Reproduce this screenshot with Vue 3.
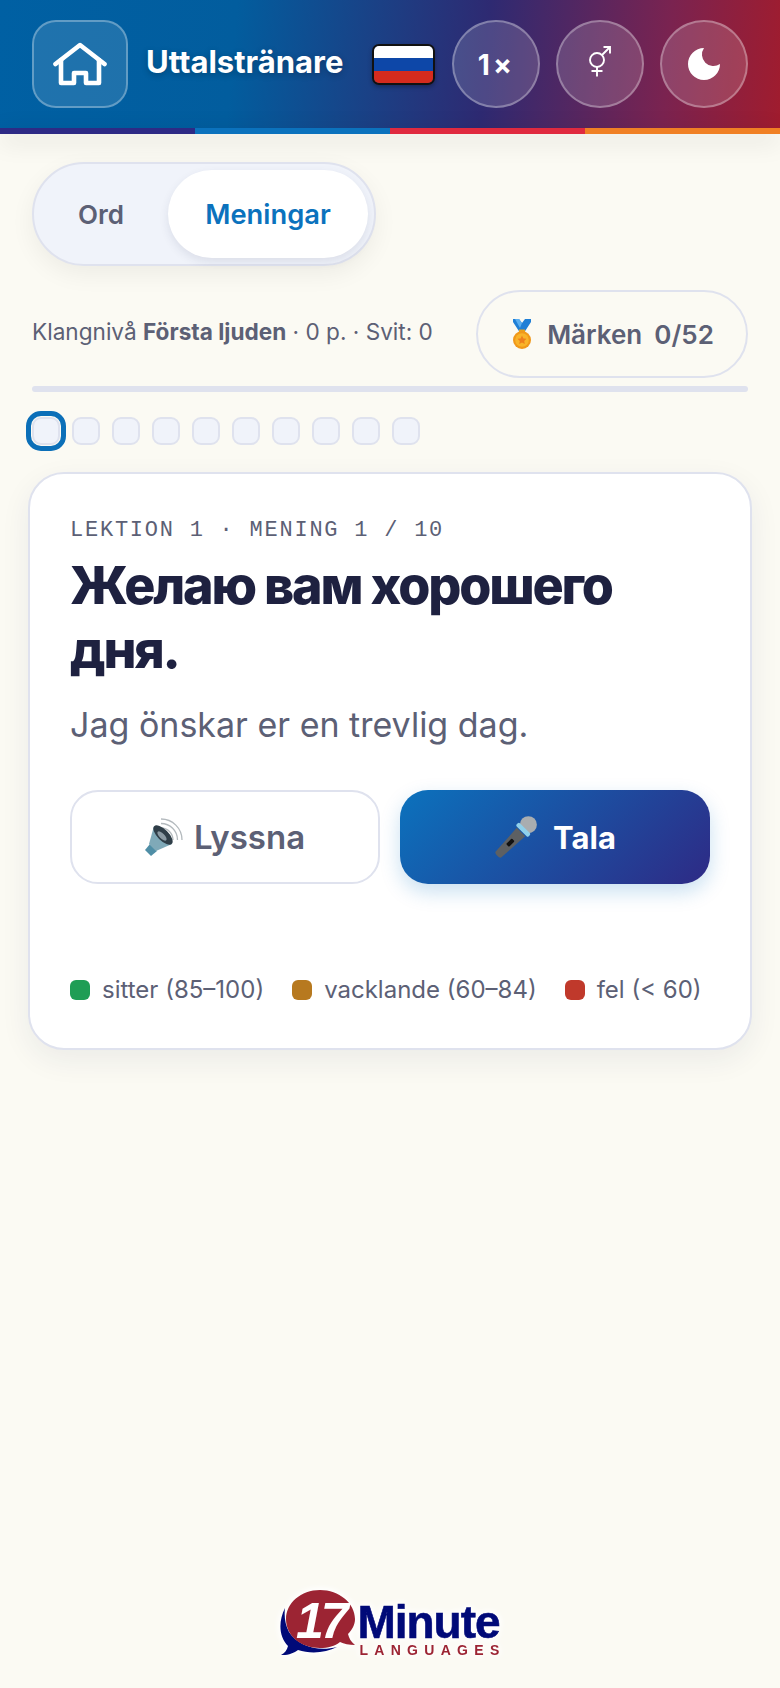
<script setup>
const cells = Array.from({ length: 10 }, (_, i) => i)
const legend = [
  { label: 'sitter (85–100)', color: '#1f9d55' },
  { label: 'vacklande (60–84)', color: '#b7791f' },
  { label: 'fel (< 60)', color: '#c0392b' }
]
</script>

<template>
  <div class="page">
    <header class="topbar">
      <button class="home">
        <svg width="54" height="44" viewBox="0 0 54 44" fill="none" stroke="#fff" stroke-width="4.600" stroke-linecap="round" stroke-linejoin="round">
          <path d="M2.500 22 L27 3 L51.500 22" />
          <path d="M8 18 V41 H21 V31 H33 V41 H46 V18" />
        </svg>
      </button>
      <h1 class="title">Uttalstränare</h1>
      <div class="flag"><i class="w"></i><i class="b"></i><i class="r"></i></div>
      <button class="round speed">1×</button>
      <button class="round">
        <svg class="gender" width="22" height="31" viewBox="0 0 22 31" fill="none" stroke="#fff" stroke-width="1.900">
          <circle cx="8" cy="14" r="7" />
          <path d="M13 9 L20.500 1.500 M14.500 1 H21 V7.500 M8 21 V30.500 M2.500 25 H13.500" />
        </svg>
      </button>
      <button class="round">
        <svg width="32" height="32" viewBox="0 0 32 32"><path fill="#fff" d="M16 0 A16 16 0 1 0 32 16 A11.500 11.500 0 0 1 16 0 Z" /></svg>
      </button>
    </header>
    <div class="stripe"><i></i><i></i><i></i><i></i></div>

    <main class="content">
      <div class="tabs">
        <button class="tab">Ord</button>
        <button class="tab active">Meningar</button>
      </div>

      <div class="status">
        <p class="level">Klangnivå <b>Första ljuden</b> · 0 p. · Svit: 0</p>
        <button class="badges">
          <svg class="medal" width="18" height="30" viewBox="0 0 18 30">
            <path fill="#1f7fd6" d="M0 0 H6 L9 4 L12 0 H18 V3 L11.500 13 H6.500 L0 3 Z" />
            <path fill="#5aaef0" d="M6 0 L9 4 L7 9 L2 0 Z" />
            <rect x="6" y="10.500" width="6" height="3" fill="#e8a21c" />
            <circle cx="9" cy="21" r="9" fill="#f0981a" />
            <circle cx="9" cy="21" r="6.800" fill="#f9b42a" />
            <path fill="#ee7f1c" d="M9 16.500 l1.400 2.900 3.100.4-2.300 2.100.6 3.100-2.800-1.500-2.800 1.500.6-3.100-2.300-2.100 3.100-.4z" />
          </svg>
          <span class="badge-label">Märken</span>
          <span>0/52</span>
        </button>
      </div>

      <div class="progress"></div>

      <div class="cells">
        <span v-for="c in cells" :key="c" class="cell" :class="{ current: c === 0 }"></span>
      </div>

      <section class="card">
        <p class="eyebrow">LEKTION 1 · MENING 1 / 10</p>
        <h2 class="sentence">Желаю вам хорошего дня.</h2>
        <p class="translation">Jag önskar er en trevlig dag.</p>

        <div class="actions">
          <button class="action listen">
            <svg width="38" height="38" viewBox="0 0 38 38">
              <g fill="none" stroke="#b3b9bd" stroke-width="1.300">
                <path d="M16 10 A12 12 0 0 1 28 22" />
                <path d="M16 5.500 A16.500 16.500 0 0 1 32.500 22" />
                <path d="M16 1 A21 21 0 0 1 37 22" />
              </g>
              <path fill="#4f8ea6" d="M5 26 L12 33 L6 38 L0 32 Z" />
              <path fill="#7fa9b8" d="M9 8 L27 26 L11 33 L4 26 Z" />
              <ellipse cx="18" cy="17" rx="12.500" ry="5.500" transform="rotate(45 18 17)" fill="#2f3e48" />
              <ellipse cx="17" cy="18" rx="6" ry="2.600" transform="rotate(45 17 18)" fill="#8b9aa3" />
            </svg>
            <span>Lyssna</span>
          </button>
          <button class="action speak">
            <svg width="44" height="44" viewBox="0 0 44 44">
              <g transform="rotate(45 22 22)">
                <path fill="#5d6063" d="M16 15 H28 L26 47 C25.500 49 18.500 49 18 47 Z" />
                <rect x="20" y="26" width="4" height="8" rx="1" fill="#111" />
                <circle cx="22" cy="4.500" r="8.500" fill="#a9adb0" />
                <rect x="13.500" y="9.500" width="17" height="4.500" rx="1.500" fill="#8fd0ea" />
              </g>
            </svg>
            <span>Tala</span>
          </button>
        </div>

        <ul class="legend">
          <li v-for="item in legend" :key="item.label">
            <i :style="{ background: item.color }"></i>
            <span>{{ item.label }}</span>
          </li>
        </ul>
      </section>
    </main>

    <footer class="brand">
      <div class="logo">
        <svg class="bubble" width="75" height="67" viewBox="0 0 75 67">
          <path fill="#000a78" d="M5 18 C-2 32 -1 47 8 56 C7 60 5 63 1 65 C8 65.500 14 63 18 60 C30 64 46 63 57 57 C38 62 18 56 9 42 C5 34 4 26 5 18 Z" />
          <path fill="#9c2433" d="M40 0 C21 0 6 13 6 29 C6 46 21 58 40 58 C48 58 55 56 60 52 C64 54 69 55 75 55 C71 52 69 48 68 44 C72 40 75 35 75 29 C75 13 59 0 40 0 Z" />
          <text x="16" y="48" class="num">17</text>
        </svg>
        <div class="words">
          <span class="minute">Minute</span>
          <span class="languages">LANGUAGES</span>
        </div>
      </div>
    </footer>
  </div>
</template>

<style>
html, body {
  margin: 0;
  background: #fbfaf3;
}
</style>

<style scoped>
* {
  box-sizing: border-box;
}

.page {
  height: 1688px;
  display: flex;
  flex-direction: column;
  background: #fbfaf3;
  font-family: Inter, "Noto Sans", sans-serif;
  color: #5c6075;
}

button {
  font-family: inherit;
  cursor: pointer;
}

.topbar {
  height: 128px;
  padding: 20px 32px 0;
  display: flex;
  align-items: flex-start;
  background: linear-gradient(95deg, #0060a3 0%, #025d9e 30%, #2e2a72 62%, #7a2350 85%, #a01c2e 100%);
}

.home {
  width: 96px;
  height: 88px;
  border-radius: 24px;
  border: 2px solid rgba(255, 255, 255, 0.3);
  background: rgba(255, 255, 255, 0.12);
  display: flex;
  align-items: center;
  justify-content: center;
  padding: 0;
  flex: none;
}

.title {
  margin: 0 0 0 18px;
  height: 88px;
  line-height: 84px;
  font-size: 31px;
  font-weight: 700;
  color: #fff;
  text-shadow: 0 2px 6px rgba(0, 0, 0, 0.25);
  white-space: nowrap;
}

.flag {
  width: 63px;
  height: 41px;
  margin: 24px 17px 0 29px;
  flex: none;
  display: flex;
  flex-direction: column;
  border: 2px solid #111;
  border-radius: 7px;
  overflow: hidden;
  box-shadow: 0 2px 4px rgba(0, 0, 0, 0.3);
}

.flag i {
  flex: 1;
}

.flag .w { background: #fff; }
.flag .b { background: #0d47a8; }
.flag .r { background: #d52b1e; }

.round {
  width: 88px;
  height: 88px;
  border-radius: 50%;
  border: 2px solid rgba(255, 255, 255, 0.3);
  background: rgba(255, 255, 255, 0.15);
  color: #fff;
  margin-right: 16px;
  display: flex;
  align-items: center;
  justify-content: center;
  padding: 0;
  flex: none;
}

.round:last-child {
  margin-right: 0;
}

.speed {
  padding-top: 2px;
  font-size: 28px;
  font-weight: 700;
  letter-spacing: 3px;
}

.gender {
  margin-bottom: 6px;
}

.stripe {
  height: 6px;
  display: flex;
  box-shadow: 0 6px 24px rgba(0, 0, 0, 0.18);
}

.stripe i {
  flex: 1;
}

.stripe i:nth-child(1) { background: #2e2a85; }
.stripe i:nth-child(2) { background: #0b72bd; }
.stripe i:nth-child(3) { background: #e02a3f; }
.stripe i:nth-child(4) { background: #f08024; }

.content {
  padding: 28px 32px 0 28px;
  flex: 1;
}

.tabs {
  margin-left: 4px;
  width: 344px;
  height: 104px;
  padding: 6px;
  display: flex;
  border: 2px solid #dfe2ee;
  border-radius: 52px;
  background: #f0f3fa;
  box-shadow: 0 8px 24px rgba(0, 0, 0, 0.06);
}

.tab {
  border: none;
  background: none;
  font-size: 26px;
  font-weight: 600;
  color: #5c6075;
  width: 122px;
  padding: 0;
}

.tab.active {
  width: 200px;
  margin-left: 6px;
  color: #0b72bd;
  font-size: 27.300px;
  background: #fff;
  border-radius: 44px;
  box-shadow: 0 4px 10px rgba(40, 50, 90, 0.1);
}

.status {
  margin: 24px 0 0 4px;
  display: flex;
  align-items: center;
  justify-content: space-between;
}

.level {
  margin: 0 0 5px;
  font-size: 22.600px;
  white-space: nowrap;
}

.badges {
  width: 272px;
  height: 88px;
  border: 2px solid #dfe2ee;
  border-radius: 44px;
  background: #fbfaf3;
  color: #5c6075;
  font-size: 26px;
  font-weight: 600;
  display: flex;
  align-items: center;
  justify-content: center;
  padding: 0 0 0 3px;
}

.medal {
  margin-right: 16px;
}

.badge-label {
  margin-right: 12px;
}

.progress {
  margin: 8px 0 0 4px;
  height: 6px;
  border-radius: 3px;
  background: #dfe2ee;
}

.cells {
  margin: 25px 0 0 4px;
  display: flex;
  gap: 12px;
}

.cell {
  width: 28px;
  height: 28px;
  border-radius: 9px;
  background: #f0f3fa;
  border: 2px solid #dfe2ee;
}

.cell.current {
  outline: 5px solid #0b6fb8;
  outline-offset: 1px;
}

.card {
  margin-top: 27px;
  width: 724px;
  padding: 43px 40px 44px;
  background: #fff;
  border: 2px solid #dfe2ee;
  border-radius: 36px;
  box-shadow: 0 10px 30px rgba(30, 40, 80, 0.07);
  display: flex;
  flex-direction: column;
}

.eyebrow {
  margin: 0;
  font-family: "Liberation Mono", monospace;
  font-size: 22px;
  line-height: 27px;
  letter-spacing: 0.08em;
  color: #5c6075;
}

.sentence {
  margin: 10px 0 0;
  font-size: 52px;
  line-height: 64px;
  font-weight: 850;
  letter-spacing: -2.200px;
  color: #1e2140;
}

.translation {
  margin: 21px 0 0;
  font-size: 34px;
  line-height: 44px;
}

.actions {
  margin-top: 43px;
  display: grid;
  grid-template-columns: 1fr 1fr;
  gap: 20px;
}

.action {
  height: 94px;
  border-radius: 28px;
  font-size: 31px;
  font-weight: 700;
  display: flex;
  align-items: center;
  justify-content: center;
  padding: 0;
}

.listen {
  background: #fff;
  border: 2px solid #dfe2ee;
  color: #5c6075;
  font-size: 33px;
  font-weight: 600;
  gap: 11px;
}

.speak {
  border: none;
  gap: 15px;
  color: #fff;
  background: linear-gradient(135deg, #0b72bd, #2e2a85);
  box-shadow: 0 8px 20px rgba(11, 114, 189, 0.22);
}

.legend {
  list-style: none;
  margin: 91px 0 0;
  padding: 0;
  display: flex;
  gap: 28px;
  font-size: 24px;
  white-space: nowrap;
}

.legend li {
  display: flex;
  align-items: center;
  gap: 12px;
}

.legend i {
  width: 20px;
  height: 20px;
  border-radius: 6px;
}

.brand {
  display: flex;
  justify-content: center;
  padding: 0 0 31px 6px;
}

.logo {
  display: flex;
  align-items: flex-start;
  height: 67px;
  filter: drop-shadow(0 0 3px #fff) drop-shadow(0 0 3px #fff);
}

.bubble {
  margin-right: 2px;
  flex: none;
}

.num {
  font-family: "Liberation Sans", sans-serif;
  font-size: 50px;
  font-weight: 700;
  font-style: italic;
  fill: #fff;
  letter-spacing: -3px;
}

.words {
  display: flex;
  flex-direction: column;
  padding-top: 12px;
}

.minute {
  font-family: "Liberation Sans", sans-serif;
  font-size: 46px;
  line-height: 40px;
  font-weight: 700;
  color: #000a78;
  letter-spacing: -1px;
  -webkit-text-stroke: 0.6px #000a78;
}

.languages {
  margin-top: 1px;
  margin-left: 2px;
  font-family: "Liberation Sans", sans-serif;
  font-size: 14px;
  line-height: 14px;
  font-weight: 700;
  letter-spacing: 6.300px;
  color: #9c2433;
}
</style>
